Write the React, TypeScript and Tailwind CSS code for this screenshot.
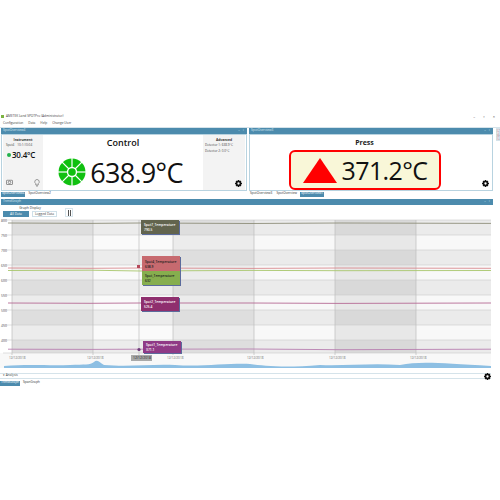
import React from "react";

const font = { fontFamily: '"Open Sans", "Noto Sans", sans-serif' };

function Gear({ size = 8 }: { size?: number }) {
  return (
    <svg width={size} height={size} viewBox="0 0 24 24" className="block">
      <circle cx="12" cy="12" r="7" fill="none" stroke="#111" strokeWidth="6" />
      {[0, 45, 90, 135, 180, 225, 270, 315].map((a) => (
        <rect key={a} x="10" y="0" width="4" height="5" fill="#111" transform={`rotate(${a} 12 12)`} />
      ))}
    </svg>
  );
}

function GreenWheel() {
  return (
    <svg width="28" height="28" viewBox="0 0 28 28" className="shrink-0">
      <circle cx="14" cy="14" r="13.5" fill="#10c010" />
      {[0, 45, 90, 135, 180, 225, 270, 315].map((a) => (
        <line key={a} x1="14" y1="14" x2="14" y2="0" stroke="#fff" strokeWidth="1.2" transform={`rotate(${a} 14 14)`} />
      ))}
      <circle cx="14" cy="14" r="5.2" fill="#fff" />
      <circle cx="14" cy="14" r="3.8" fill="#10c010" />
    </svg>
  );
}

function Header({ title }: { title: string }) {
  return (
    <div className="flex h-[6px] items-center justify-between bg-[#4c8bad] px-[2px] text-[3.2px] leading-none text-[#d8e8f0]">
      <span>{title}</span>
      <span className="flex gap-[3px] pr-[1px]">
        <span>–</span>
        <span>▫</span>
      </span>
    </div>
  );
}

function TabStrip({ tabs, active }: { tabs: string[]; active: number }) {
  return (
    <div className="flex h-[6px] items-center gap-[2px] text-[3.2px] leading-none text-[#333]">
      {tabs.map((t, i) => (
        <span key={t} className={i === active ? "flex h-[5px] items-center bg-[#4c8bad] px-[1px] text-white" : "px-[1px]"}>
          {t}
        </span>
      ))}
    </div>
  );
}

const Y_LABELS = ["800", "750", "700", "650", "600", "550", "500", "450", "400"];

function Chart() {
  const cols = [12, 93, 173, 254, 335, 416, 491];
  const rows = [220, 235, 250, 265, 280, 295, 310, 325, 340, 353];
  return (
    <svg width="500" height="149" viewBox="0 219 500 149" className="block">
      <rect x="0" y="219" width="500" height="149" fill="#fff" />
      <rect x="0" y="353" width="491" height="15" fill="#f8f8f8" />
      {rows.slice(0, -1).map((y, i) =>
        cols.slice(0, -1).map((x, j) => {
          const shades = [
            ["#dedede", "#ececec", "#dedede", "#ebebeb", "#d9d9d9", "#ebebeb"],
            ["#ececec", "#fafafa", "#ececec", "#f8f8f8", "#e8e8e8", "#f8f8f8"],
          ];
          const c = shades[i % 2][j];
          return <rect key={`${x}-${y}`} x={x} y={y} width={cols[j + 1] - x} height={rows[i + 1] - y} fill={c} />;
        })
      )}
      {rows.map((y) => (
        <line key={y} x1="3" x2="491" y1={y} y2={y} stroke="#c9c9c9" strokeWidth="0.6" />
      ))}
      {[12, 93, 139, 173, 254, 335, 416].map((x) => (
        <line key={x} x1={x} x2={x} y1="220" y2="355" stroke="#bdbdbd" strokeWidth="0.7" />
      ))}
      <polyline fill="none" stroke="#8f8f7a" strokeWidth="0.9" points="8,223 90,223.4 140,223 250,223.5 340,223 491,223.4" />
      <polyline fill="none" stroke="#d98a90" strokeWidth="0.9" points="8,268 90,268.3 140,268 250,268.4 340,268 491,268.3" />
      <polyline fill="none" stroke="#a8c66c" strokeWidth="0.9" points="8,270.5 90,270.2 140,271 250,270.4 340,270.7 491,270.5" />
      <polyline fill="none" stroke="#b56a94" strokeWidth="0.9" points="8,303 90,303.3 140,303 250,303 340,303.4 491,303" />
      <polyline fill="none" stroke="#b87fb0" strokeWidth="0.9" points="8,349.2 90,349.4 140,349.2 250,349 340,349.7 491,349.2" />
      <path
        fill="#8dbfe3"
        d="M4,368 L4,366 C30,364 50,366 70,365 C85,364.5 90,365 94,362 C97,359 99,362 104,365 C130,367 150,364 175,365 C200,367 230,363 250,364 C265,366 285,368 320,365 C345,366 370,363 400,365 C420,361 440,363 491,366 L491,368 Z"
      />
      {Y_LABELS.map((t, i) => (
        <text key={t} x="1" y={222 + i * 15} fontSize="3.4" fill="#555">
          {t}
        </text>
      ))}
      {[15, 93, 173, 253, 335, 416].map((x) => (
        <text key={x} x={x - 6} y="359" fontSize="3.1" fill="#666">
          12/12/2018
        </text>
      ))}
      <rect x="131" y="355" width="21" height="6" fill="#a9a9a9" />
      <text x="133" y="359.3" fontSize="3.4" fill="#222">
        12/12/2018
      </text>
      <circle cx="139" cy="349.5" r="1.6" fill="#6e3a7a" />
      <rect x="137" y="265" width="3" height="3" fill="#b5485a" />
    </svg>
  );
}

function Tip({ color, pos, title, value, dark }: { color: string; pos: string; title: string; value: string; dark?: boolean }) {
  return (
    <div
      className={`absolute flex w-[38px] flex-col justify-center px-[3px] text-[3.3px] font-semibold leading-[5px] shadow-[1px_1px_0_#5b6b9c] ${pos} ${dark ? "text-[#222]" : "text-white"}`}
      style={{ backgroundColor: color }}
    >
      <span>{title}</span>
      <span>{value}</span>
    </div>
  );
}

export default function App() {
  return (
    <div className="relative h-[500px] w-[500px] overflow-hidden bg-white" style={font}>
      <div className="h-[113px]" />
      <div className="flex h-[8px] items-center justify-between pl-[1px] pr-[5px] text-[3.2px] leading-none text-[#444]">
        <div className="flex items-center gap-[2px]">
          <span className="h-[3px] w-[3px] bg-[#7cb342]" />
          <span>AMETEK Land SPOTPro (Administrator)</span>
        </div>
        <div className="flex gap-[8px] text-[4px]">
          <span>–</span>
          <span>▫</span>
          <span>×</span>
        </div>
      </div>
      <div className="flex h-[7px] items-center gap-[5px] border-b border-[#d5e3ea] pl-[3px] text-[3.2px] leading-none text-[#444]">
        <span>Configuration</span>
        <span>Data</span>
        <span>Help</span>
        <span>Change User</span>
      </div>

      <div className="flex gap-[2px] pl-[1px]">
        <div className="flex w-[246px] flex-col">
          <Header title="SpotOverview4" />
          <div className="flex h-[57px] border border-[#b8d3e0] px-[1px]">
            <div className="flex w-[40px] flex-col bg-[#f3f3f3] pt-[3px]">
              <div className="text-center text-[3.3px] font-bold leading-none text-[#333]">Instrument</div>
              <div className="mt-[3px] flex gap-[3px] pl-[3px] text-[3.1px] leading-none text-[#444]">
                <span>Spot4</span>
                <span>10:1:10:04</span>
              </div>
              <div className="mt-[4px] flex items-center gap-[1px] pl-[4px]">
                <span className="h-[4px] w-[4px] rounded-full bg-[#22b14c]" />
                <span className="text-[8px] font-semibold leading-none tracking-[-0.2px] text-[#111]">30.4°C</span>
              </div>
              <div className="mt-auto flex justify-between px-[3px] pb-[3px]">
                <svg width="7" height="6" viewBox="0 0 14 12" fill="none" stroke="#555" strokeWidth="1.2">
                  <rect x="1" y="2.5" width="12" height="8.5" rx="1" />
                  <circle cx="7" cy="6.7" r="2.6" />
                </svg>
                <svg width="6" height="8" viewBox="0 0 12 16" fill="none" stroke="#555" strokeWidth="1.1">
                  <path d="M6 1a4.5 4.5 0 0 0-2.5 8.2V12h5V9.2A4.5 4.5 0 0 0 6 1zM4 14h4" />
                </svg>
              </div>
            </div>
            <div className="flex flex-1 flex-col items-center pt-[2px]">
              <div className="text-[9px] font-semibold leading-[12px] text-[#111]">Control</div>
              <div className="mr-[5px] mt-[9px] flex items-center gap-[4px]">
                <GreenWheel />
                <span className="text-[27px] leading-none tracking-[-0.7px] text-[#111]">638.9°C</span>
              </div>
            </div>
            <div className="flex w-[42px] flex-col bg-[#f3f3f3] pt-[3px]">
              <div className="text-center text-[3.3px] font-bold leading-none text-[#333]">Advanced</div>
              <div className="mt-[2px] pl-[2px] text-[3.1px] leading-[5.5px] text-[#444]">
                <div>Detector 1: 638.9°C</div>
                <div>Detector 2: 0.0°C</div>
              </div>
              <div className="mt-auto flex justify-end pb-[3px] pr-[3px]">
                <Gear size={7} />
              </div>
            </div>
          </div>
          <TabStrip tabs={["SpotOverview4", "SpotOverview2"]} active={0} />
        </div>

        <div className="flex w-[244px] flex-col">
          <Header title="SpotOverview3" />
          <div className="relative flex h-[57px] flex-col items-center border border-[#b8d3e0] pr-[13px] pt-[3px]">
            <div className="text-[7px] font-bold leading-[9px] text-[#222]">Press</div>
            <div className="mt-[3px] flex h-[40px] w-[152px] items-center rounded-[6px] border-[2px] border-[#f00] bg-[#f9f7d8] pl-[12px]">
              <div className="h-0 w-0 border-x-[17px] border-b-[25px] border-x-transparent border-b-[#f00]" />
              <span className="ml-[5px] text-[25px] leading-none tracking-[-0.6px] text-[#111]">371.2°C</span>
            </div>
            <div className="absolute bottom-[3px] right-[3px]">
              <Gear size={7} />
            </div>
          </div>
          <TabStrip tabs={["SpotOverview3", "SpotOverview", "SpotOverview1"]} active={2} />
        </div>
        <div className="ml-[1px] flex h-[13px] w-[4px] items-center justify-center border border-[#d5e3ea] text-[2.8px] text-[#8a5a6a] [writing-mode:vertical-rl]">
          Loadout
        </div>
      </div>

      <div className="mt-[2px] w-[493px] pl-[1px]">
        <Header title="TrendGraph" />
      </div>
      <div className="flex h-[14px] items-start pl-[3px] pt-[1px]">
        <div className="flex flex-col">
          <div className="text-center text-[3.3px] leading-[4px] text-[#333]">Graph Display</div>
          <div className="mt-[1px] flex gap-[3px] text-[3.3px] leading-none">
            <span className="flex h-[6px] w-[26px] items-center justify-center bg-[#4c8bad] text-white">All Data</span>
            <span className="flex h-[6px] w-[25px] items-center justify-center border border-[#cfe0e8] text-[#444]">Logged Data</span>
          </div>
        </div>
        <div className="ml-[8px] mt-[2px] flex h-[9px] w-[8px] items-center justify-center gap-[1px] border border-[#d8e5ec]">
          <span className="h-[6px] w-[1px] bg-[#555]" />
          <span className="h-[6px] w-[1px] bg-[#555]" />
        </div>
      </div>

      <div className="relative h-[149px]">
        <Chart />
        <Tip color="#62644e" pos="top-[1px] left-[141px] h-[14px]" title="Spot7_Temperature" value="790.5" />
        <Tip color="#c76a6f" pos="top-[37px] left-[142px] h-[15px]" title="Spot4_Temperature" value="638.9" dark />
        <Tip color="#86ae4e" pos="top-[52px] left-[142px] h-[14px]" title="Spot_Temperature" value="632" dark />
        <Tip color="#8f2f6e" pos="top-[78px] left-[141px] h-[14px]" title="Spot2_Temperature" value="525.4" />
        <Tip color="#8f3a86" pos="top-[122px] left-[143px] h-[12px]" title="Spot1_Temperature" value="371.1" />
      </div>

      <div className="mt-[5px] flex h-[6px] w-[491px] items-center justify-between border-y border-[#d5e3ea] pl-[3px] text-[3.2px] leading-none text-[#444]">
        <span>▾ Analysis</span>
        <div className="-mb-[1px] -mt-[1px]">
          <Gear size={7} />
        </div>
      </div>
      <div className="mt-[1px]">
        <TabStrip tabs={["TrendGraph", "SpanGraph"]} active={0} />
      </div>
    </div>
  );
}
